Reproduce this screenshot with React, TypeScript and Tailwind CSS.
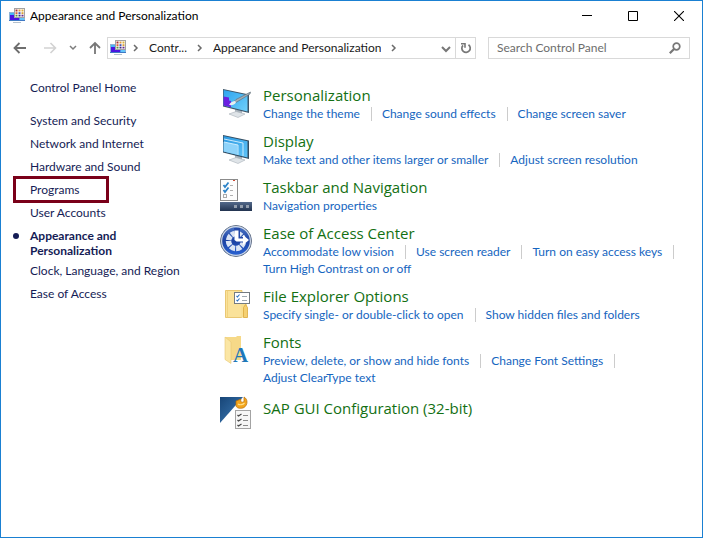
import type { ReactNode } from "react";

function ControlPanelIcon() {
  return (
    <svg className="size-4 shrink-0" viewBox="0 0 16 16" aria-hidden="true">
      <path d="M0 4h16v9H0z" fill="#8fb3d6" />
      <path d="M1 5h14v7H1z" fill="#49b4f5" />
      <path d="M1 7h4v3h6l-1 2H1z" fill="#4a14e0" />
      <path d="M10 9h5v3h-4z" fill="#63c5fa" />
      <path d="M0 12h16v1H0z" fill="#3f79c4" />
      <path d="M4 14h8v1H4z" fill="#b4c1cc" />
      <path d="M5 0h11v10H5z" fill="#a3a3a3" />
      <path d="M6 1h9v8H6z" fill="#ffffff" />
      <path d="M6.500 1.500h2v2h-2z" fill="#a8322e" />
      <path d="M9.500 1.500h2v2h-2z" fill="#e09a3a" />
      <path d="M12.500 1.500h2v2h-2z" fill="#ddb03c" />
      <path d="M6.500 4.200h2v2h-2z" fill="#d8603a" />
      <path d="M9.500 4.200h2v2h-2z" fill="#4a52b0" />
      <path d="M12.500 4.200h2v2h-2z" fill="#d8a038" />
      <path d="M6.500 6.800h2v1.700h-2z" fill="#57953b" />
      <path d="M9.500 6.800h2v1.700h-2z" fill="#3c2a80" />
      <path d="M12.500 6.800h2v1.700h-2z" fill="#6a2a8c" />
    </svg>
  );
}

function PersonalizationIcon() {
  return (
    <svg className="size-9" viewBox="0 0 36 36" aria-hidden="true">
      <defs>
        <linearGradient id="pscreen" x1="0" y1="0" x2="1" y2="1">
          <stop offset="0" stopColor="#2da3ee" />
          <stop offset="1" stopColor="#6fd0fb" />
        </linearGradient>
      </defs>
      <path d="M17 24l7 2v4l-7-1z" fill="#aab4bd" />
      <path d="M11 29l7-2.500 9 2.500-7 3.500z" fill="#dfe4e8" stroke="#a8b0b8" strokeWidth=".6" />
      <path d="M5 4l26 5.500V28L5 21.500z" fill="#3d5568" />
      <path d="M5.600 5l23.900 5.200v16.200L5.600 20.500z" fill="url(#pscreen)" />
      <path d="M5.600 11.500l5.400 1v3l2 .5v6.300l-7.400-1.800z" fill="#6a1fe0" />
      <path d="M15 17.500l3-3L32.500 7l-.5 2-14 8.500z" fill="#a3aeb6" stroke="#5a6872" strokeWidth=".6" />
      <path d="M11 20c1.500-3 4-4 6-4l1 1.500c-1 2-4 3-7 2.500z" fill="#e9eef2" />
    </svg>
  );
}

function DisplayIcon() {
  return (
    <svg className="size-9" viewBox="0 0 36 36" aria-hidden="true">
      <defs>
        <linearGradient id="dscreen" x1="0" y1="0" x2="1" y2="1">
          <stop offset="0" stopColor="#2a98e2" />
          <stop offset="1" stopColor="#60c4f8" />
        </linearGradient>
      </defs>
      <path d="M17 24l7 2v4l-7-1z" fill="#aab4bd" />
      <path d="M11 29l7-2.500 9 2.500-7 3.500z" fill="#dfe4e8" stroke="#a8b0b8" strokeWidth=".6" />
      <path d="M5 4l26 5.500V28L5 21.500z" fill="#344c60" />
      <path d="M5.600 5l23.900 5.200v16.200L5.600 20.500z" fill="url(#dscreen)" />
      <path d="M5.600 11l13.900 3v9.700L5.600 20.500z" fill="#8ed3fa" />
      <path d="M6 8l19 4v13M6 11l14 3v10" fill="none" stroke="#d8f2ff" strokeWidth=".9" />
    </svg>
  );
}

function TaskbarIcon() {
  return (
    <svg className="size-9" viewBox="0 0 36 36" aria-hidden="true">
      <defs>
        <linearGradient id="bar" x1="0" y1="0" x2="0" y2="1">
          <stop offset="0" stopColor="#53698a" />
          <stop offset="1" stopColor="#22334f" />
        </linearGradient>
      </defs>
      <rect x="2.500" y="2.500" width="17" height="21" fill="#fdfdfd" stroke="#8b8b8b" />
      <path d="M15 3.500h2" stroke="#cf4a35" strokeWidth="1" />
      <path d="M5.500 8l1.500 2 3.500-4.500M5.500 13l1.500 2 3.500-4.500" fill="none" stroke="#2c83c8" strokeWidth="1.800" />
      <rect x="5.500" y="17.500" width="3" height="3" fill="none" stroke="#aaa" />
      <path d="M12 8.500h3M12 13.500h3M12 18.500h3" stroke="#b0b0b0" strokeWidth="1" />
      <rect x="2" y="25" width="32" height="9" fill="url(#bar)" />
      <path d="M16 28h3v3h-3zM22 28h3v3h-3zM28 28h3v3h-3z" fill="#929dac" />
    </svg>
  );
}

function EaseOfAccessIcon() {
  return (
    <svg className="size-9" viewBox="0 0 36 36" aria-hidden="true">
      <defs>
        <linearGradient id="ease" x1="0" y1="0" x2="0" y2="1">
          <stop offset="0" stopColor="#4f78c8" />
          <stop offset=".5" stopColor="#1b41a2" />
          <stop offset="1" stopColor="#2b66d8" />
        </linearGradient>
      </defs>
      <circle cx="18" cy="18" r="15.500" fill="url(#ease)" stroke="#6d7887" strokeWidth="1" />
      <circle cx="18" cy="18" r="14.400" fill="none" stroke="#d0d8e4" strokeWidth="1.200" />
      <circle
        cx="18"
        cy="18"
        r="7.500"
        fill="none"
        stroke="#dce5f5"
        strokeWidth="5.500"
        strokeDasharray="4.890 1"
        transform="rotate(6 18 18)"
      />
      <path d="M16 5h6v9h8v6l-12-1z" fill="#2449a8" />
      <path d="M16.500 7.500h4v8H25V12l6 5-6 5v-3.500h-6.500l-2-1.500z" fill="#fff" />
    </svg>
  );
}

function FolderOptionsIcon() {
  return (
    <svg className="size-9" viewBox="0 0 36 36" aria-hidden="true">
      <path d="M7.500 4.500h16.500v27H7.500z" fill="#fae29a" stroke="#e3bd5c" strokeWidth=".8" />
      <path d="M9.500 4.500v27" stroke="#f0cf78" strokeWidth=".8" />
      <path d="M23 8h6v23.500h-6z" fill="#f9df90" />
      <path d="M25.500 31.500v-10l2-3 2 3v10z" fill="#f5d071" stroke="#dba93f" strokeWidth=".8" />
      <rect x="16.500" y="6.500" width="15" height="11" fill="#fff" stroke="#747b82" />
      <path d="M18.500 10l1 1 2-2.500M18.500 14l1 1 2-2.500" fill="none" stroke="#2c72c0" strokeWidth="1.100" />
      <path d="M24 10.500h5M24 14.500h5" stroke="#9ea7b0" strokeWidth="1" />
    </svg>
  );
}

function FontsIcon() {
  return (
    <svg className="size-9" viewBox="0 0 36 36" aria-hidden="true">
      <path d="M7.500 5h10.500l1-1h4v24H7.500z" fill="#f6d988" />
      <path d="M7 5l6 5v21.500l-6-4z" fill="#fbe6a4" stroke="#e8c873" strokeWidth=".6" />
      <text
        x="15"
        y="30"
        fontFamily="'Liberation Serif', serif"
        fontWeight="bold"
        fontSize="21"
        fill="#1f78b8"
      >
        A
      </text>
    </svg>
  );
}

function SapIcon() {
  return (
    <svg className="size-9" viewBox="0 0 36 36" aria-hidden="true">
      <defs>
        <linearGradient id="sap" x1="0" y1="0" x2="1" y2="1">
          <stop offset="0" stopColor="#174577" />
          <stop offset="1" stopColor="#3f7db8" />
        </linearGradient>
      </defs>
      <path d="M2 2h23L2 28z" fill="url(#sap)" />
      <path d="M18 6l5-2c-1 3 1 4 3 2.500V2c4 2 4 8 0 10.500-3 1.500-7 1-8-1.500z" fill="#f3a51c" stroke="#b66d0a" strokeWidth=".7" />
      <path d="M20 9c2 1.500 5 .5 6.500-1" fill="none" stroke="#ffe08a" strokeWidth="1.200" />
      <rect x="17.500" y="15.500" width="15" height="18" fill="#f6f6f6" stroke="#a3a3a3" />
      <path
        d="M19.500 20l1 1 3-2M19.500 25l1 1 3-2M19.500 30l1 1 3-2"
        fill="none"
        stroke="#454545"
        strokeWidth="1.200"
      />
      <path d="M25 20.500h5M25 25.500h5M25 30.500h5" stroke="#8a8a8a" strokeWidth="1" />
    </svg>
  );
}

function Chevron() {
  return (
    <svg className="h-2 w-1.5 shrink-0" viewBox="0 0 6 8" aria-hidden="true">
      <path d="M1 1l3 3-3 3" fill="none" stroke="#6b6b6b" strokeWidth="1.500" />
    </svg>
  );
}

const sidebarLinks = [
  { label: "System and Security" },
  { label: "Network and Internet" },
  { label: "Hardware and Sound" },
  { label: "Programs", marked: true },
  { label: "User Accounts" },
  { label: "Appearance and Personalization", current: true },
  { label: "Clock, Language, and Region" },
  { label: "Ease of Access" },
];

type Section = {
  title: string;
  icon: ReactNode;
  links: string[];
};

const sections: Section[] = [
  {
    title: "Personalization",
    icon: <PersonalizationIcon />,
    links: ["Change the theme", "Change sound effects", "Change screen saver"],
  },
  {
    title: "Display",
    icon: <DisplayIcon />,
    links: ["Make text and other items larger or smaller", "Adjust screen resolution"],
  },
  {
    title: "Taskbar and Navigation",
    icon: <TaskbarIcon />,
    links: ["Navigation properties"],
  },
  {
    title: "Ease of Access Center",
    icon: <EaseOfAccessIcon />,
    links: [
      "Accommodate low vision",
      "Use screen reader",
      "Turn on easy access keys",
      "Turn High Contrast on or off",
    ],
  },
  {
    title: "File Explorer Options",
    icon: <FolderOptionsIcon />,
    links: ["Specify single- or double-click to open", "Show hidden files and folders"],
  },
  {
    title: "Fonts",
    icon: <FontsIcon />,
    links: [
      "Preview, delete, or show and hide fonts",
      "Change Font Settings",
      "Adjust ClearType text",
    ],
  },
  {
    title: "SAP GUI Configuration (32-bit)",
    icon: <SapIcon />,
    links: [],
  },
];

function TitleBar() {
  return (
    <header className="flex h-[30px] items-center pl-2">
      <ControlPanelIcon />
      <h1 className="ml-[5px] flex-1 truncate text-black">Appearance and Personalization</h1>

      <div className="flex h-7">
        <button type="button" aria-label="Minimize" className="grid w-[46px] place-items-center">
          <svg className="size-2.5" viewBox="0 0 10 10">
            <path d="M0 4.500h10" stroke="#000" />
          </svg>
        </button>
        <button type="button" aria-label="Maximize" className="grid w-[46px] place-items-center">
          <svg className="size-2.5" viewBox="0 0 10 10">
            <path d="M.5.5h9v9h-9z" fill="none" stroke="#000" />
          </svg>
        </button>
        <button type="button" aria-label="Close" className="grid w-[46px] place-items-center">
          <svg className="size-2.5" viewBox="0 0 10 10">
            <path d="M0 0l10 10M10 0L0 10" stroke="#000" strokeWidth="1.100" />
          </svg>
        </button>
      </div>
    </header>
  );
}

function NavBar() {
  return (
    <nav aria-label="Address" className="mt-1.5 flex h-[22px] items-center pr-3 pl-3">
      <button type="button" aria-label="Back" className="shrink-0">
        <svg className="h-3 w-3.5" viewBox="0 0 14 12">
          <path d="M13 6H2M6.500 1L1.500 6l5 5" fill="none" stroke="#6e6e6e" strokeWidth="1.800" />
        </svg>
      </button>
      <button type="button" aria-label="Forward" className="ml-4 shrink-0">
        <svg className="h-3 w-3.5" viewBox="0 0 14 12">
          <path d="M1 6h11M7.500 1l5 5-5 5" fill="none" stroke="#d2d2d2" strokeWidth="1.600" />
        </svg>
      </button>
      <button type="button" aria-label="Recent locations" className="ml-3 shrink-0">
        <svg className="h-2 w-2" viewBox="0 0 8 8">
          <path d="M1 2l3 3 3-3" fill="none" stroke="#7d7d7d" strokeWidth="1.500" />
        </svg>
      </button>
      <button type="button" aria-label="Up" className="ml-3 shrink-0">
        <svg className="h-3.5 w-3" viewBox="0 0 12 14">
          <path d="M6 13V2M1 7l5-5 5 5" fill="none" stroke="#777" strokeWidth="1.800" />
        </svg>
      </button>

      <div className="ml-1.5 flex h-full min-w-0 flex-1 items-center border border-[#d9d9d9] pl-0.5">
        <ControlPanelIcon />
        <span className="ml-[7px] flex">
          <Chevron />
        </span>
        <button type="button" className="ml-2.5 shrink-0">
          Contr...
        </button>
        <span className="ml-2.5 flex">
          <Chevron />
        </span>
        <button type="button" className="ml-2.5 truncate">
          Appearance and Personalization
        </button>
        <span className="ml-2.5 flex">
          <Chevron />
        </span>
        <button type="button" aria-label="Previous locations" className="ml-auto shrink-0 pr-1">
          <svg className="h-3 w-2.5" viewBox="0 0 10 12">
            <path d="M1 5l4 4 4-4" fill="none" stroke="#777" strokeWidth="2" />
          </svg>
        </button>
        <button
          type="button"
          aria-label="Refresh"
          className="grid h-full w-5 shrink-0 place-items-center border-l border-[#d9d9d9]"
        >
          <svg className="size-3" viewBox="0 0 12 12">
            <path d="M8.500 2.800A4.200 4.200 0 1 1 3 3.300" fill="none" stroke="#777" strokeWidth="1.700" />
            <path d="M1 1.800h4v4" fill="none" stroke="#777" strokeWidth="1.600" />
          </svg>
        </button>
      </div>

      <div className="ml-3 flex h-full w-[202px] shrink-0 items-center border border-[#d9d9d9] pr-2 pl-2">
        <input
          type="search"
          aria-label="Search Control Panel"
          placeholder="Search Control Panel"
          className="min-w-0 flex-1 outline-none placeholder:text-[#6d6d6d]"
        />
        <svg className="size-3 shrink-0" viewBox="0 0 12 12" aria-hidden="true">
          <circle cx="7.500" cy="4.500" r="3.300" fill="none" stroke="#777" strokeWidth="1.700" />
          <path d="M5.300 6.700L.8 11.200" stroke="#777" strokeWidth="2.200" />
        </svg>
      </div>
    </nav>
  );
}

function Sidebar() {
  return (
    <aside className="w-[207px] shrink-0 pl-3 leading-[15px] text-[#151c55]">
      <a href="#home" className="ml-[17px] block">
        Control Panel Home
      </a>

      <ul className="mt-[18px]">
        {sidebarLinks.map((link) => (
          <li
            key={link.label}
            className={
              link.current ? "relative mb-[5px] w-36 pl-[17px] font-bold" : "relative mb-2 pl-[17px]"
            }
          >
            {link.marked && (
              <span className="pointer-events-none absolute -top-1.5 left-0 h-[27px] w-24 border-3 border-[#7a0019]" />
            )}
            {link.current && (
              <span className="absolute top-[5px] left-0 size-1.5 rounded-full bg-[#151c55]" />
            )}
            <a href="#category" aria-current={link.current ? "page" : undefined}>
              {link.label}
            </a>
          </li>
        ))}
      </ul>
    </aside>
  );
}

function SectionRow({ title, icon, links }: Section) {
  return (
    <section className="flex gap-[9px]">
      <div className="shrink-0">{icon}</div>

      <div className={links.length > 0 ? "min-w-0 flex-1" : "min-w-0 flex-1 pt-[3px]"}>
        <h2 className="font-['Open_Sans','Noto_Sans',sans-serif] text-[15px] leading-5 text-[#137013]">
          <a href="#section">{title}</a>
        </h2>

        {links.length > 0 && (
          <ul className="flex flex-wrap text-[#1565c0]">
            {links.map((label, index) => (
              <li key={label} className="flex items-center leading-[17px]">
                <a href="#task">{label}</a>
                {index < links.length - 1 && (
                  <span className="mr-2.5 ml-[11px] h-3.5 border-l border-[#cccccc]" />
                )}
              </li>
            ))}
          </ul>
        )}
      </div>
    </section>
  );
}

export default function App() {
  return (
    <div className="flex min-h-screen flex-col border border-[#1a80d2] bg-white font-['Lato','Open_Sans',sans-serif] text-xs text-[#1a1a1a]">
      <TitleBar />
      <NavBar />

      <div className="flex flex-1 pt-[21px]">
        <Sidebar />
        <main className="flex min-w-0 flex-1 flex-col gap-[9px] pt-[5px] pl-2.5">
          {sections.map((section) => (
            <SectionRow key={section.title} {...section} />
          ))}
        </main>
      </div>
    </div>
  );
}
